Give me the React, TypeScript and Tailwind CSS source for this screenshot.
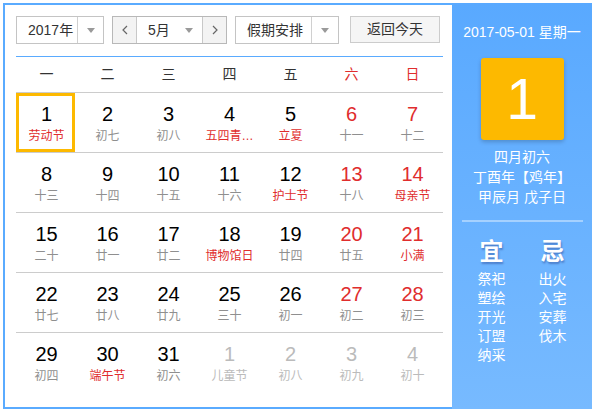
import React from 'react';

type Day = {
  n: number;
  lunar: string;
  holiday?: boolean;
  weekend?: boolean;
  other?: boolean;
  selected?: boolean;
};

const weeks: Day[][] = [
  [
    { n: 1, lunar: '劳动节', holiday: true, selected: true },
    { n: 2, lunar: '初七' },
    { n: 3, lunar: '初八' },
    { n: 4, lunar: '五四青…', holiday: true },
    { n: 5, lunar: '立夏', holiday: true },
    { n: 6, lunar: '十一', weekend: true },
    { n: 7, lunar: '十二', weekend: true },
  ],
  [
    { n: 8, lunar: '十三' },
    { n: 9, lunar: '十四' },
    { n: 10, lunar: '十五' },
    { n: 11, lunar: '十六' },
    { n: 12, lunar: '护士节', holiday: true },
    { n: 13, lunar: '十八', weekend: true },
    { n: 14, lunar: '母亲节', weekend: true, holiday: true },
  ],
  [
    { n: 15, lunar: '二十' },
    { n: 16, lunar: '廿一' },
    { n: 17, lunar: '廿二' },
    { n: 18, lunar: '博物馆日', holiday: true },
    { n: 19, lunar: '廿四' },
    { n: 20, lunar: '廿五', weekend: true },
    { n: 21, lunar: '小满', weekend: true, holiday: true },
  ],
  [
    { n: 22, lunar: '廿七' },
    { n: 23, lunar: '廿八' },
    { n: 24, lunar: '廿九' },
    { n: 25, lunar: '三十' },
    { n: 26, lunar: '初一' },
    { n: 27, lunar: '初二', weekend: true },
    { n: 28, lunar: '初三', weekend: true },
  ],
  [
    { n: 29, lunar: '初四' },
    { n: 30, lunar: '端午节', holiday: true },
    { n: 31, lunar: '初六' },
    { n: 1, lunar: '儿童节', other: true },
    { n: 2, lunar: '初八', other: true },
    { n: 3, lunar: '初九', other: true },
    { n: 4, lunar: '初十', other: true },
  ],
];

const weekdays = ['一', '二', '三', '四', '五', '六', '日'];

const Caret = () => (
  <svg width="8" height="5" viewBox="0 0 8 5">
    <path d="M0 0 L8 0 L4 5 Z" fill="#9a9a9a" />
  </svg>
);

const Chevron = ({ dir }: { dir: 'left' | 'right' }) => (
  <svg width="6" height="10" viewBox="0 0 6 10">
    <polyline
      points={dir === 'left' ? '5,1 1,5 5,9' : '1,1 5,5 1,9'}
      fill="none"
      stroke="#666"
      strokeWidth="1.2"
    />
  </svg>
);

const DayCell = ({ d }: { d: Day }) => {
  const numColor = d.other ? 'text-[#bbbbbb]' : d.weekend ? 'text-[#e02d2d]' : 'text-black';
  const lunarColor = d.other ? 'text-[#bbbbbb]' : d.holiday ? 'text-[#e02d2d]' : 'text-[#8f8f8f]';
  return (
    <div className="relative flex flex-col items-center pt-[10px]">
      {d.selected && (
        <div className="absolute top-0 left-0 w-[59px] h-[59px] border-[3px] border-[#fdb900]" />
      )}
      <div className={`text-[20px] leading-[22px] ${numColor}`}>{d.n}</div>
      <div className={`mt-[3px] whitespace-nowrap text-[12px] leading-[16px] ${lunarColor}`}>
        {d.lunar}
      </div>
    </div>
  );
};

export default function App() {
  return (
    <div
      className="w-[597px] h-[414px] bg-white pl-[3px] pt-[3px]"
      style={{ fontFamily: '"Liberation Sans", "Noto Sans CJK SC", sans-serif' }}
    >
      <div className="flex h-[406px] w-[589px]">
        {/* left calendar */}
        <div className="w-[449px] border-l-2 border-t-2 border-b-2 border-[#5aabff] pl-[11px] pt-[11px]">
          <div className="flex h-[28px] items-stretch text-[14px] text-[#333]">
            <div className="flex w-[88px] border border-[#c4c4c4]">
              <div className="flex flex-1 items-center pl-[11px]">2017年</div>
              <div className="flex w-[26px] items-center justify-center border-l border-[#d0d0d0]">
                <Caret />
              </div>
            </div>
            <div className="ml-[8px] flex w-[115px] border border-[#b8b8b8]">
              <div className="flex w-[24px] items-center justify-center bg-[#f3f3f3] border-r border-[#c8c8c8]">
                <Chevron dir="left" />
              </div>
              <div className="flex flex-1 items-center justify-between pl-[11px] pr-[9px]">
                <span>5月</span>
                <Caret />
              </div>
              <div className="flex w-[24px] items-center justify-center bg-[#f3f3f3] border-l border-[#c8c8c8]">
                <Chevron dir="right" />
              </div>
            </div>
            <div className="ml-[8px] flex w-[104px] border border-[#c4c4c4]">
              <div className="flex flex-1 items-center pl-[11px]">假期安排</div>
              <div className="flex w-[27px] items-center justify-center border-l border-[#d0d0d0]">
                <Caret />
              </div>
            </div>
            <div className="ml-[11px] flex w-[90px] h-[27px] items-center justify-center border border-[#cccccc] bg-[#f5f5f5]">
              返回今天
            </div>
          </div>

          <div className="mt-[12px] w-[427px] border-t border-[#5aabff]">
            <div className="grid h-[36px] grid-cols-7 border-b border-[#cccccc] text-[14px]">
              {weekdays.map((w, i) => (
                <div
                  key={w}
                  className={`flex items-center justify-center ${i >= 5 ? 'text-[#e02d2d]' : 'text-[#333]'}`}
                >
                  {w}
                </div>
              ))}
            </div>
            {weeks.map((week, wi) => (
              <div
                key={wi}
                className={`grid h-[60px] grid-cols-7 ${wi < weeks.length - 1 ? 'border-b border-[#cccccc]' : ''}`}
              >
                {week.map((d, di) => (
                  <DayCell key={di} d={d} />
                ))}
              </div>
            ))}
          </div>
        </div>

        {/* right panel */}
        <div className="flex w-[140px] flex-col items-center bg-gradient-to-b from-[#59a9ff] to-[#77baff] pt-[19px] text-white">
          <div className="text-[14px] leading-[20px]">2017-05-01 星期一</div>
          <div className="mt-[16px] flex h-[82px] w-[83px] items-center justify-center rounded-[3px] bg-[#fdb900] shadow-[0_2px_4px_rgba(0,0,0,0.2)]">
            <span className="text-[57px] leading-none">1</span>
          </div>
          <div className="mt-[7px] flex flex-col items-center text-[14px] leading-[20px]">
            <div>四月初六</div>
            <div>丁酉年【鸡年】</div>
            <div>甲辰月 戊子日</div>
          </div>
          <div className="mt-[13px] h-[2px] w-[121px] bg-white/40" />
          <div className="mt-[15px] grid w-[122px] grid-cols-2">
            <div className="flex flex-col items-center">
              <div className="text-[24px] font-bold leading-[30px] [text-shadow:1px_2px_2px_rgba(0,0,80,0.3)]">宜</div>
              <div className="mt-[3px] flex flex-col items-center text-[14px] leading-[19px]">
                <div>祭祀</div>
                <div>塑绘</div>
                <div>开光</div>
                <div>订盟</div>
                <div>纳采</div>
              </div>
            </div>
            <div className="flex flex-col items-center">
              <div className="text-[24px] font-bold leading-[30px] [text-shadow:1px_2px_2px_rgba(0,0,80,0.3)]">忌</div>
              <div className="mt-[3px] flex flex-col items-center text-[14px] leading-[19px]">
                <div>出火</div>
                <div>入宅</div>
                <div>安葬</div>
                <div>伐木</div>
              </div>
            </div>
          </div>
        </div>
      </div>
    </div>
  );
}
